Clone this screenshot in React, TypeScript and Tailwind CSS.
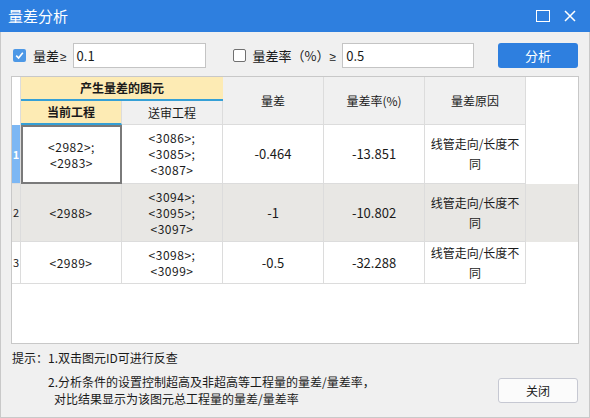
const font = { fontFamily: '"Noto Sans CJK SC", "Noto Sans", sans-serif' }

function Check({ checked }: { checked: boolean }) {
  return checked ? (
    <span className="flex h-[13px] w-[13px] shrink-0 items-center justify-center rounded-[2px] bg-[#4d98e6]">
      <svg width="9" height="9" viewBox="0 0 9 9">
        <path d="M1.2 4.6 L3.6 7 L7.8 1.8" fill="none" stroke="white" strokeWidth="1.6" />
      </svg>
    </span>
  ) : (
    <span className="block h-[13px] w-[13px] shrink-0 rounded-[2px] border border-[#707070] bg-white" />
  )
}

const rows = [
  { cur: ['<2982>;', '<2983>'], rev: ['<3086>;', '<3085>;', '<3087>'], diff: '-0.464', rate: '-13.851', h: 'h-[59px]', bg: 'bg-white' },
  { cur: ['<2988>'], rev: ['<3094>;', '<3095>;', '<3097>'], diff: '-1', rate: '-10.802', h: 'h-[58px]', bg: 'bg-[#e8e7e4]' },
  { cur: ['<2989>'], rev: ['<3098>;', '<3099>'], diff: '-0.5', rate: '-32.288', h: 'h-[42px]', bg: 'bg-white' },
]

function Lines({ items }: { items: string[] }) {
  return (
    <div className="flex flex-col items-center leading-[16px] tracking-[0.5px]">
      {items.map((t) => (
        <span key={t}>{t}</span>
      ))}
    </div>
  )
}

export default function App() {
  return (
    <div className="relative h-[418px] w-[590px] overflow-hidden bg-[#f0f0f0] text-[12px] text-[#1a1a1a]" style={font}>
      <div className="flex h-[32px] items-center justify-between bg-[#2e7fdf] pl-[8px] pr-[14px] text-white">
        <span className="text-[15px]">量差分析</span>
        <div className="flex items-center gap-[14px]">
          <span className="h-[12px] w-[14px] border-[1.5px] border-white" />
          <svg width="12" height="12" viewBox="0 0 12 12">
            <path d="M1 1 L11 11 M11 1 L1 11" stroke="white" strokeWidth="1.5" />
          </svg>
        </div>
      </div>

      <div className="flex h-[44px] items-center pl-[13px] pr-[12px] pt-[11px] pb-[8px]">
        <Check checked />
        <span className="ml-[7px] text-[13px]">量差<span className="ml-[1px] font-['Liberation_Sans'] text-[12px]">≥</span></span>
        <div className="ml-[6px] flex h-[25px] w-[133px] items-center border border-[#c4c4c4] bg-white pl-[3px] text-[13px]">0.1</div>
        <span className="ml-[27px] flex"><Check checked={false} /></span>
        <span className="ml-[7px] text-[13px]">量差率（%）<span className="font-['Liberation_Sans'] text-[12px]">≥</span></span>
        <div className="ml-[6px] flex h-[25px] w-[132px] items-center border border-[#c4c4c4] bg-white pl-[3px] text-[13px]">0.5</div>
        <button className="ml-auto h-[25px] w-[80px] rounded-[3px] bg-[#2e7fdf] text-[13px] text-white">分析</button>
      </div>

      <div className="mx-[11px] h-[268px] border border-[#c8c8c8] bg-white">
        <div className="flex">
          <div className="w-[9px] shrink-0 border-r border-[#dcdcdc] bg-white" />
          <div className="flex w-[202px] flex-col">
            <div className="flex h-[24px] items-center justify-center border-b-2 border-[#35a0d6] bg-[#fdebb4] font-bold">产生量差的图元</div>
            <div className="flex h-[24px]">
              <div className="flex w-[101px] items-center justify-center border-b-2 border-r border-[#35a0d6] border-r-[#dcdcdc] bg-[#fdebb4] font-bold">当前工程</div>
              <div className="flex w-[101px] items-center justify-center border-b border-r border-[#dcdcdc] bg-[#f0f0f0]">送审工程</div>
            </div>
          </div>
          {['量差', '量差率(%)', '量差原因'].map((t) => (
            <div key={t} className="flex h-[48px] w-[101px] items-center justify-center border-b border-r border-[#dcdcdc] bg-[#f0f0f0]">{t}</div>
          ))}
        </div>
        {rows.map((r, i) => (
          <div key={i} className={`flex ${r.h} ${r.bg}`}>
            <div className={`flex w-[9px] shrink-0 items-center justify-center border-b border-r border-[#dcdcdc] text-[11px] ${i === 0 ? 'bg-[#7cb7f4] font-bold text-white' : ''}`}>{i + 1}</div>
            <div className={`flex w-[101px] items-center justify-center ${i === 0 ? 'border-2 border-[#7a7a7a]' : 'border-b border-r border-[#dcdcdc]'}`}>
              <Lines items={r.cur} />
            </div>
            <div className="flex w-[101px] items-center justify-center border-b border-r border-[#dcdcdc]">
              <Lines items={r.rev} />
            </div>
            <div className="flex w-[101px] items-center justify-center border-b border-r border-[#dcdcdc] text-[13px]">{r.diff}</div>
            <div className="flex w-[101px] items-center justify-center border-b border-r border-[#dcdcdc] text-[13px]">{r.rate}</div>
            <div className="flex w-[101px] items-center justify-center border-b border-r border-[#dcdcdc] px-[2px] text-center leading-[20px]">线管走向/长度不同</div>
          </div>
        ))}
      </div>

      <div className="relative mt-[5px] pl-[12px] leading-[17px]">
        <div>提示：1.双击图元ID可进行反查</div>
        <div className="mt-[7px] pl-[36px]">2.分析条件的设置控制超高及非超高等工程量的量差/量差率，</div>
        <div className="pl-[42px]">对比结果显示为该图元总工程量的量差/量差率</div>
        <button className="absolute right-[12px] top-[29px] h-[25px] w-[80px] rounded-[3px] border border-[#c6c8d2] bg-[#fbfbfb] text-[12px]">关闭</button>
      </div>
      <div className="pointer-events-none absolute inset-0 top-[32px] border border-t-0 border-[#c9c9c9]" />
    </div>
  )
}
